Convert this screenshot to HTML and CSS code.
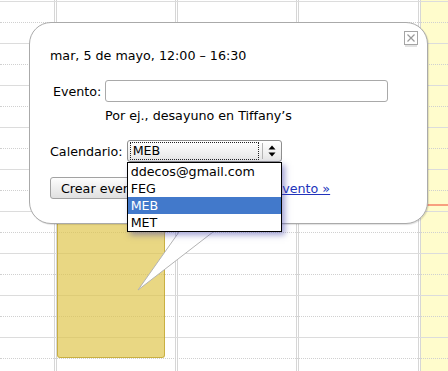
FILE: index.html
```html
<!DOCTYPE html>
<html lang="es">
<head>
  <meta charset="UTF-8">
  <title>Calendario - nuevo evento</title>
  <link rel="stylesheet" href="styles.css">
</head>
<body>

<div class="calendar">
  <!-- day columns -->
  <div class="cols">
    <div class="time-col"></div>
    <div class="day">
      <div class="event"></div>
    </div>
    <div class="day"></div>
    <div class="day wide"></div>
    <div class="day today">
      <div class="now-line"></div>
    </div>
  </div>

  <!-- hour and half hour lines -->
  <div class="rows">
    <div class="hour"><div class="half"></div></div>
    <div class="hour"><div class="half"></div></div>
    <div class="hour"><div class="half"></div></div>
    <div class="hour"><div class="half"></div></div>
    <div class="hour"><div class="half"></div></div>
    <div class="hour"><div class="half"></div></div>
    <div class="hour"><div class="half"></div></div>
    <div class="hour"><div class="half"></div></div>
    <div class="hour"><div class="half"></div></div>
  </div>

  <!-- quick add bubble -->
  <div class="bubble">
    <svg class="tail" width="110" height="80" viewBox="0 0 110 80">
      <polygon points="61,0 8,75 105,0" fill="#fff"/>
      <polyline points="61,0 8,75 105,0" fill="none" stroke="#b3b3b3" stroke-width="1"/>
    </svg>

    <div class="close">
      <svg width="12" height="12" viewBox="0 0 12 12">
        <path d="M2.5 2.5 L9.5 9.5 M9.5 2.5 L2.5 9.5" stroke="#9a9a9a" stroke-width="1.2"/>
      </svg>
    </div>

    <p class="when">mar, 5 de mayo, 12:00 – 16:30</p>

    <div class="field-row">
      <label class="event-label" for="what">Evento:</label>
      <input class="what" id="what" type="text">
    </div>
    <p class="hint">Por ej., desayuno en Tiffany’s</p>

    <div class="field-row">
      <span>Calendario:</span>
      <div class="select">
        <div class="select-value">MEB</div>
        <div class="select-arrow">
          <svg width="8" height="12" viewBox="0 0 8 12">
            <polygon points="0.5,4.5 4,0.5 7.5,4.5" fill="#000"/>
            <polygon points="0.5,7.5 4,11.5 7.5,7.5" fill="#000"/>
          </svg>
        </div>
        <div class="options">
          <div class="option">ddecos@gmail.com</div>
          <div class="option">FEG</div>
          <div class="option selected">MEB</div>
          <div class="option">MET</div>
        </div>
      </div>
    </div>

    <div class="actions">
      <button class="create">Crear evento</button>
      <a class="details" href="#">editar detalles del evento »</a>
    </div>
  </div>
</div>

</body>
</html>
```

FILE: styles.css
```css
body {
  margin: 0;
  font-family: "DejaVu Sans", Verdana, sans-serif;
  font-size: 12.7px;
  color: #000;
  background: #fff;
}
.calendar {
  position: relative;
  display: grid;
  width: 448px;
  height: 371px;
  overflow: hidden;
}
.cols,
.rows {
  grid-area: 1 / 1;
}
.cols {
  display: flex;
  height: 371px;
}
.time-col {
  width: 55px;
  box-sizing: border-box;
  border-right: 1px solid #d6d6d6;
}
.day {
  position: relative;
  width: 120px;
  margin-left: 1px;
  box-sizing: border-box;
  border-left: 1px solid #d6d6d6;
  border-right: 1px solid #d6d6d6;
}
.day.wide {
  width: 121px;
}
.day.today {
  flex: 1;
  border-right: none;
  background-color: #fffccc;
}
.rows {
  z-index: 1;
  padding-top: 1px;
  pointer-events: none;
}
.hour {
  height: 41px;
  border-top: 1px solid #dcdcdc;
}
.half {
  height: 20px;
  border-bottom: 1px dotted #d0d0d0;
}
.event {
  position: absolute;
  z-index: 2;
  top: 168px;
  left: 0;
  width: 108px;
  height: 190px;
  box-sizing: border-box;
  background-color: rgba(222, 196, 72, 0.68);
  border: 1px solid rgba(188, 160, 40, 0.7);
  border-radius: 3px;
}
.now-line {
  position: absolute;
  z-index: 2;
  top: 204px;
  left: 0;
  right: 0;
  height: 2px;
  background-color: #f8a07f;
}

/* bubble */
.bubble {
  position: absolute;
  z-index: 3;
  left: 29px;
  top: 22px;
  width: 399px;
  height: 202px;
  box-sizing: border-box;
  padding: 25px 20px 0 20px;
  background-color: #fff;
  border: 1px solid #aaa;
  border-radius: 22px;
  box-shadow: 1px 1px 1px rgba(0, 0, 0, 0.12);
}
.tail {
  position: absolute;
  left: 100px;
  top: 192px;
}
.close {
  position: absolute;
  left: 374px;
  top: 8px;
  width: 14px;
  height: 14px;
  box-sizing: border-box;
  border: 1px solid #a5a5a5;
  box-shadow: 0 3px 0 -1px #e2e2e2;
  background: #fff;
}
.close svg {
  display: block;
}
.when {
  margin: 0;
  line-height: 15px;
}
.field-row {
  display: flex;
  align-items: center;
  gap: 4px;
  height: 22px;
  margin-top: 17px;
}
.event-label {
  margin-left: 3px;
}
.what {
  width: 283px;
  height: 22px;
  box-sizing: border-box;
  margin: 0;
  padding: 0 4px;
  border: 1px solid #a9a9a9;
  border-radius: 3px;
  font: inherit;
}
.hint {
  margin: 6px 0 0 55px;
  line-height: 15px;
}
.select {
  position: relative;
  display: flex;
  width: 155px;
  height: 22px;
  box-sizing: border-box;
  border: 1px solid #8e8e8e;
  border-radius: 3px;
  background: linear-gradient(#ffffff, #e6e6e6);
}
.select-value {
  flex: 1;
  margin: 1px 3px 1px 2px;
  padding-left: 2px;
  border: 1px dotted #222;
  line-height: 16px;
}
.select-arrow {
  display: flex;
  align-items: center;
  justify-content: center;
  width: 18px;
  margin: 2px 0;
  border-left: 1px solid #b4b4b4;
}
.options {
  position: absolute;
  left: -1px;
  top: 21px;
  width: 155px;
  box-sizing: border-box;
  border: 1px solid #000;
  background: #fff;
  box-shadow: 3px 3px 6px rgba(70, 70, 170, 0.5);
}
.option {
  height: 17px;
  line-height: 17px;
  padding-left: 3px;
}
.option.selected {
  background-color: #4279cb;
  color: #fff;
}
.actions {
  display: flex;
  align-items: center;
  margin-top: 15px;
}
.create {
  height: 22px;
  margin: 0;
  padding: 0 10px;
  border: 1px solid #a2a2a2;
  border-radius: 3px;
  background: linear-gradient(#fdfdfd, #e0e0e0);
  font: inherit;
  color: #000;
}
.details {
  margin-left: 1px;
  color: #2233bb;
}
```
